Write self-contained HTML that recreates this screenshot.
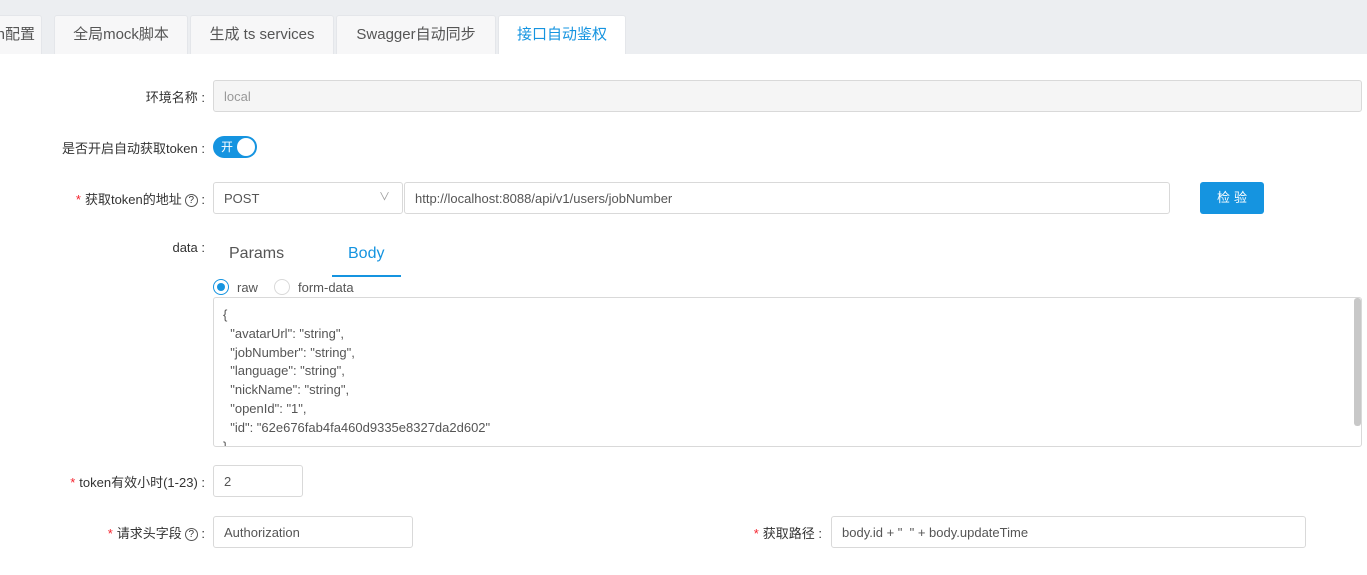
<!DOCTYPE html>
<html><head><meta charset="utf-8"><style>
*{box-sizing:border-box;margin:0;padding:0}
body{width:1367px;height:575px;background:#fff;font-family:"Liberation Sans","Noto Sans CJK SC",sans-serif;font-size:13px;color:#333;position:relative;overflow:hidden}
.bar{position:absolute;left:0;top:0;width:1367px;height:54px;background:#eceef1}
.tab{position:absolute;top:15px;height:39px;background:#f7f7f8;border:1px solid #e4e6ea;border-bottom:none;border-radius:3px 3px 0 0;font-size:15px;color:#555;line-height:37px;text-align:center}
.tab.on{background:#fff;color:#1594e0}
.lbl{position:absolute;right:1162px;text-align:right;color:#333;white-space:nowrap}
.lbl .s{color:#f5222d;margin-right:4px}
.q{display:inline-block;width:13px;height:13px;border:1px solid #555;border-radius:50%;font-size:10px;line-height:11px;text-align:center;vertical-align:1px;margin-left:3px}
.in{position:absolute;border:1px solid #d9d9d9;border-radius:3px;height:32px;line-height:31px;padding-left:10px;color:#555;background:#fff}
.ta{position:absolute;left:213px;top:297px;width:1149px;height:150px;border:1px solid #d9d9d9;border-radius:3px;padding:8px 0 0 9px;font-size:13px;line-height:18.8px;color:#555;white-space:pre;overflow:hidden}
</style></head><body>
<div class="bar"></div>
<div class="tab" style="left:-10px;width:52px;text-align:right;padding-right:6px">n配置</div>
<div class="tab" style="left:54px;width:134px">全局mock脚本</div>
<div class="tab" style="left:190px;width:144px">生成 ts services</div>
<div class="tab" style="left:336px;width:160px">Swagger自动同步</div>
<div class="tab on" style="left:498px;width:128px">接口自动鉴权</div>

<div class="lbl" style="top:87px">环境名称 :</div>
<div class="in" style="left:213px;top:80px;width:1149px;background:#f5f5f5;color:#999">local</div>

<div class="lbl" style="top:138px">是否开启自动获取token :</div>
<div style="position:absolute;left:213px;top:136px;width:44px;height:22px;border-radius:11px;background:#1594e0;color:#fff;font-size:12px;line-height:22px;padding-left:8px">开<div style="position:absolute;right:2px;top:2px;width:18px;height:18px;border-radius:50%;background:#fff"></div></div>

<div class="lbl" style="top:189px"><span class="s">*</span>获取token的地址<span class="q">?</span> :</div>
<div class="in" style="left:213px;top:182px;width:190px">POST<span style="position:absolute;right:12px;top:-1px;color:#999;font-size:11px">&#8744;</span></div>
<div class="in" style="left:404px;top:182px;width:766px">http://localhost:8088/api/v1/users/jobNumber</div>
<div style="position:absolute;left:1200px;top:182px;width:64px;height:32px;background:#1594e0;border-radius:3px;color:#fff;text-align:center;line-height:32px;letter-spacing:4px;padding-left:4px">检验</div>

<div class="lbl" style="top:240px">data :</div>
<div style="position:absolute;left:229px;top:245px;font-size:16px;color:#555">Params</div>
<div style="position:absolute;left:348px;top:245px;font-size:16px;color:#1594e0">Body</div>
<div style="position:absolute;left:332px;top:275px;width:69px;height:2px;background:#1594e0"></div>
<div style="position:absolute;left:213px;top:279px;width:16px;height:16px;border:1px solid #1594e0;border-radius:50%"><div style="position:absolute;left:3px;top:3px;width:8px;height:8px;border-radius:50%;background:#1594e0"></div></div>
<div style="position:absolute;left:237px;top:280px;color:#555">raw</div>
<div style="position:absolute;left:274px;top:279px;width:16px;height:16px;border:1px solid #d9d9d9;border-radius:50%"></div>
<div style="position:absolute;left:298px;top:280px;color:#555">form-data</div>
<div class="ta">{
  "avatarUrl": "string",
  "jobNumber": "string",
  "language": "string",
  "nickName": "string",
  "openId": "1",
  "id": "62e676fab4fa460d9335e8327da2d602"
}</div>
<div style="position:absolute;left:1354px;top:298px;width:7px;height:128px;background:#c8c8c8;border-radius:3px"></div>

<div class="lbl" style="top:472px"><span class="s">*</span>token有效小时(1-23) :</div>
<div class="in" style="left:213px;top:465px;width:90px">2</div>

<div class="lbl" style="top:523px"><span class="s">*</span>请求头字段<span class="q">?</span> :</div>
<div class="in" style="left:213px;top:516px;width:200px">Authorization</div>
<div class="lbl" style="top:523px;right:545px"><span class="s">*</span>获取路径 :</div>
<div class="in" style="left:831px;top:516px;width:475px">body.id + "&nbsp; " + body.updateTime</div>
</body></html>
